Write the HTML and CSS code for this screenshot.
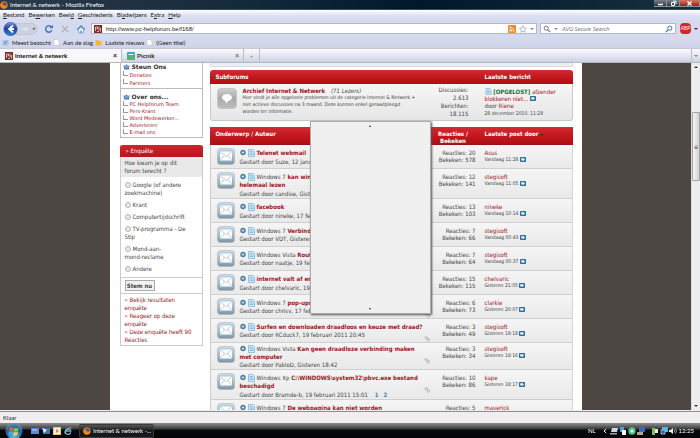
FILE: index.html
```html
<!DOCTYPE html>
<html lang="nl">
<head>
<meta charset="utf-8">
<title>Internet &amp; netwerk - Mozilla Firefox</title>
<link rel="stylesheet" href="styles.css">
</head>
<body>
<svg class="defs" aria-hidden="true">
  <defs>
    <linearGradient id="steel" x1="0" y1="0" x2="0" y2="1"><stop offset="0" stop-color="#dfe6ea"/><stop offset="1" stop-color="#7f929e"/></linearGradient>
    <linearGradient id="glass" x1="0" y1="0" x2="0" y2="1"><stop offset="0" stop-color="#b4d2e2"/><stop offset="1" stop-color="#86a9bd"/></linearGradient>
    <linearGradient id="grey" x1="0" y1="0" x2="0" y2="1"><stop offset="0" stop-color="#cfcfcf"/><stop offset=".5" stop-color="#a9a9a9"/><stop offset="1" stop-color="#bdbdbd"/></linearGradient>
    <radialGradient id="orb" cx=".5" cy=".8" r=".8"><stop offset="0" stop-color="#5fc4ee"/><stop offset=".6" stop-color="#1c5f9c"/><stop offset="1" stop-color="#7d98ab"/></radialGradient>
    <linearGradient id="back" x1="0" y1="0" x2="0" y2="1"><stop offset="0" stop-color="#7d9ce0"/><stop offset=".45" stop-color="#1c3f9e"/><stop offset="1" stop-color="#2d7fe0"/></linearGradient>
  </defs>
  <symbol id="mail" viewBox="0 0 18 17"><rect x=".5" y=".5" width="17" height="16" rx="3" fill="url(#steel)" stroke="#a9b5bc" stroke-width=".6"/><rect x="2" y="1.6" width="14" height="12.6" rx="2" fill="url(#glass)"/><rect x="3" y="3.500" width="12" height="9" fill="#fdfdfd"/><path d="M3 3.500l6 5.100L15 3.500M3 12.500l4.300-5M15 12.500l-4.300-5" fill="none" stroke="#9fadb5" stroke-width=".6"/></symbol>
  <symbol id="page" viewBox="0 0 7 8"><path d="M.5.500h4.600L6.500 2v5.500h-6z" fill="#d8edfb" stroke="#7db4de" stroke-width=".8"/><path d="M1.600 2.500h3M1.600 4h4M1.600 5.500h4" stroke="#6fb0de" stroke-width=".8"/></symbol>
  <symbol id="dot" viewBox="0 0 6 6"><circle cx="3" cy="3" r="2.700" fill="#4f7f9c"/><path d="M1.700 2.300h2.600L3 4.400z" fill="#fff"/></symbol>
  <symbol id="go" viewBox="0 0 6 5"><rect width="6" height="5" rx=".8" fill="#2d6f9c"/><path d="M1.200 1.300h2v-.6L5 2.500 3.200 4.200v-.7h-2z" fill="#e8f3fa"/></symbol>
  <symbol id="clip" viewBox="0 0 8 7"><path d="M1 3.200L3 1.200l4 3.600-1.600 1.600L2.500 3.700l1-1 2.400 2.200" fill="#dce5eb" stroke="#a9bac5" stroke-width=".9"/></symbol>
  <symbol id="globe" viewBox="0 0 7 6"><path d="M.5 1l1.500 1L3.500.2 5 2l1.500-1-.5 4.500H1z" fill="#4d80c0"/><path d="M1.500 3h4" stroke="#b5d2ee" stroke-width=".8"/></symbol>
  <symbol id="fox" viewBox="0 0 8 8"><circle cx="4" cy="4" r="3.800" fill="#e66a12"/><circle cx="4.400" cy="3.500" r="2.100" fill="#31579f"/><path d="M.4 3C1.500 2.200 3 3 3.600 4c.8 1.200 2.400 1 3.500-.2C7 6.500 5.400 7.600 4 7.600 2 7.600.2 6 .4 3z" fill="#f08a1a"/></symbol>
  <symbol id="fav" viewBox="0 0 8 8"><rect width="8" height="8" fill="#7b2a26"/><path d="M1.500 6V2h2v2h-1M5 1.500v4M6.500 3v3.500M3 6.500h2" fill="none" stroke="#e6c9c4" stroke-width=".9"/></symbol>
  <symbol id="sheet" viewBox="0 0 7 8"><path d="M.5.500h4L6.500 2.500v5h-6z" fill="#fff" stroke="#b8bdc9" stroke-width=".7"/></symbol>
  <symbol id="glassm" viewBox="0 0 8 8"><circle cx="3.200" cy="3.200" r="2.100" fill="none" stroke="currentColor"/><path d="M4.800 4.800l2.400 2.400" stroke="currentColor" stroke-width="1.200"/></symbol>
</svg>

<header class="titlebar">
  <svg class="i8"><use href="#fox"/></svg>
  <span class="caption">Internet &amp; netwerk - Mozilla Firefox</span>
  <div class="winbtns">
    <button aria-label="Minimaliseren"><svg viewBox="0 0 12 7"><path d="M4 4.500h5" stroke="#fff" stroke-width="1.500"/></svg></button>
    <button aria-label="Herstellen"><svg viewBox="0 0 12 7"><path d="M4.500 2.500h3v3h-3zM6 1.200h3v3" fill="none" stroke="#fff"/></svg></button>
    <button class="close" aria-label="Sluiten"><svg viewBox="0 0 18 7"><path d="M7 1.500l4 4M11 1.500l-4 4" stroke="#fff" stroke-width="1.300"/></svg></button>
  </div>
</header>

<nav class="menubar">
  <button><u>B</u>estand</button><button>Be<u>w</u>erken</button><button>Beel<u>d</u></button><button><u>G</u>eschiedenis</button><button>Bl<u>a</u>dwijzers</button><button>E<u>x</u>tra</button><button><u>H</u>elp</button>
</nav>

<div class="navbar">
  <button class="nav-back" aria-label="Terug en vooruit"><svg viewBox="0 0 36 14"><rect x="8" y="1.500" width="27" height="11" rx="5.500" fill="#cbd1dd" stroke="#b5bccb" stroke-width=".6"/><circle cx="8.500" cy="7" r="6.700" fill="url(#back)" stroke="#3a4f86" stroke-width=".5"/><path d="M11 3.500L7 7l4 3.500M7 7h5" fill="none" stroke="#fff" stroke-width="1.800"/><path d="M19 7h6M23 5l2.500 2L23 9" fill="none" stroke="#dfe3ec" stroke-width="1.400"/><path d="M30.500 6.300h3L32 8z" fill="#444"/></svg></button>
  <button class="nav-ico" aria-label="Vernieuwen"><svg viewBox="0 0 10 10"><path d="M7.800 6.200A3.200 3.200 0 1 1 7 2.600" fill="none" stroke="#3d78c4" stroke-width="1.500"/><path d="M5.300 4.300H9V.7z" fill="#3d78c4"/></svg></button>
  <button class="nav-ico" aria-label="Stoppen"><svg viewBox="0 0 10 10"><path d="M2 2l6 6M8 2L2 8" stroke="#aeb4c2" stroke-width="1.400"/></svg></button>
  <button class="nav-ico" aria-label="Startpagina"><svg viewBox="0 0 10 10"><path d="M1 5.600L5 1.800l4 3.800" fill="none" stroke="#4d86bd" stroke-width="1.300"/><path d="M2.500 5.500L5 3.200l2.500 2.300V9h-5z" fill="#e9f2fa" stroke="#6b9cc8" stroke-width=".7"/><path d="M4.400 6.500h1.300V9H4.400z" fill="#4d86bd"/></svg></button>
  <div class="urlbox">
    <svg class="i8"><use href="#fav"/></svg>
    <input aria-label="Adres" value="http://www.pc-helpforum.be/f168/">
    <svg class="i8" viewBox="0 0 8 8"><rect width="8" height="8" rx="1" fill="#ee8a26"/><path d="M1.500 2a4.500 4.500 0 0 1 4.500 4.500M1.500 4a2.500 2.500 0 0 1 2.500 2.500" fill="none" stroke="#fff"/><circle cx="2" cy="6" r=".7" fill="#fff"/></svg>
    <svg class="i8" viewBox="0 0 8 8"><path d="M4 .7l1 2.200 2.400.3-1.700 1.700.4 2.400L4 6.200 1.900 7.300l.4-2.400L.6 3.200 3 2.900z" fill="#fff" stroke="#8b8f98" stroke-width=".6"/></svg>
    <span class="caret"></span>
  </div>
  <div class="searchbox">
    <svg class="i8 dim"><use href="#glassm"/></svg><span class="caret"></span>
    <input aria-label="Zoeken" placeholder="AVG Secure Search">
    <svg class="i8 flip"><use href="#glassm"/></svg>
  </div>
  <button class="abp">ABP</button><span class="caret dark"></span>
</div>

<div class="bookmarks">
  <a href="#"><svg class="i7" viewBox="0 0 7 7"><rect x=".5" y="1" width="6" height="5.500" rx="1" fill="#9cc5ee"/><path d="M2 5l3-3" stroke="#3f78b8"/></svg>Meest bezocht</a>
  <a href="#"><svg class="i7"><use href="#sheet"/></svg>Aan de slag</a>
  <a href="#"><svg class="i7" viewBox="0 0 7 7"><path d="M.5 1h2.500l.8 1h2.700v4.500h-6z" fill="#f4b73c"/></svg>Laatste nieuws</a>
  <a href="#"><svg class="i7"><use href="#sheet"/></svg>(Geen titel)</a>
</div>

<div class="tabs">
  <button class="tab active"><svg class="i8"><use href="#fav"/></svg><span>Internet &amp; netwerk</span><i>×</i></button>
  <button class="tab"><svg class="i8" viewBox="0 0 8 8"><rect width="8" height="8" rx="1" fill="#3aa6c8"/><path d="M0 5.500Q4 3 8 5.500V8H0z" fill="#58b85a"/><path d="M1.500 2.500h5" stroke="#fff"/></svg><span>Picnik</span><i>×</i></button>
  <button class="newtab" aria-label="Nieuw tabblad">+</button>
  <button class="alltabs" aria-label="Alle tabbladen"><span class="caret"></span></button>
</div>

<div class="viewport">
  <div class="canvas">
    <div class="page">
      <aside>
        <section class="linkbox">
          <h2><svg><use href="#globe"/></svg>Steun Ons</h2>
          <ul><li><a href="#">Donaties</a></li><li><a href="#">Partners</a></li></ul>
        </section>
        <section class="linkbox second">
          <h2><svg><use href="#globe"/></svg>Over ons...</h2>
          <ul><li><a href="#">PC Helpforum Team</a></li><li><a href="#">Pers-Krant</a></li><li><a href="#">Word Medewerker...</a></li><li><a href="#">Adverteren</a></li><li><a href="#">E-mail ons</a></li></ul>
        </section>
        <form class="poll">
          <h2>» Enquête</h2>
          <p>Hoe kwam je op dit forum terecht ?</p>
          <div class="options">
            <label><input type="radio" name="q">Google (of andere zoekmachine)</label>
            <label><input type="radio" name="q">Krant</label>
            <label><input type="radio" name="q">Computertijdschrift</label>
            <label><input type="radio" name="q">TV-programma - De Stip</label>
            <label><input type="radio" name="q">Mond-aan-<br>mond-reclame</label>
            <label><input type="radio" name="q">Andere</label>
          </div>
          <div class="vote"><button type="button">Stem nu</button></div>
          <div class="results"><a href="#">» Bekijk resultaten enquête</a><a href="#">» Reageer op deze enquête</a><a href="#">» Deze enquête heeft 90 Reacties</a></div>
        </form>
      </aside>

      <main>
        <div class="stub"></div>
        <section class="subforums">
          <div class="redbar"><span>Subforums</span><span>Laatste bericht</span></div>
          <div class="forum">
            <svg class="bubble" viewBox="0 0 20 21"><rect x=".5" y=".5" width="19" height="20" rx="3.500" fill="url(#grey)" stroke="#c6c6c6"/><ellipse cx="10" cy="9.500" rx="5" ry="3.500" fill="#fff"/><path d="M8 12l1 3.500 3-3.500z" fill="#fff"/></svg>
            <div class="about"><h3><a href="#">Archief Internet &amp; Netwerk</a> <em>(71 Lezers)</em></h3><p>Hier vindt je alle opgeloste problemen uit de categorie Internet &amp; Netwerk + niet actieve discussies na 3 maand. Deze kunnen enkel geraadpleegd worden ter informatie.</p></div>
            <div class="totals">Discussies:<br>2.613<br>Berichten:<br>18.115</div>
            <div class="latest"><svg class="pg"><use href="#page"/></svg> <a href="#"><b>[OPGELOST]</b> afzender<br>blokkeren niet...</a> <svg class="go"><use href="#go"/></svg><br>door <a href="#">Riene</a><br><small>28 december 2010, 11:28</small></div>
          </div>
        </section>

        <table class="threads">
          <colgroup><col class="c-icon"><col><col class="c-count"><col class="c-last"></colgroup>
          <thead><tr><th colspan="2">Onderwerp / Auteur</th><th class="mid">Reacties / Bekeken</th><th class="by">Laatste post door <span class="caret dark"></span></th></tr></thead>
          <tbody>
            <tr class="loose"><td><svg class="mail"><use href="#mail"/></svg></td><td><svg class="dot"><use href="#dot"/></svg><svg class="pg"><use href="#page"/></svg><a href="#">Telenet webmail</a><p>Gestart door Suze, 12 januari 2011</p></td><td>Reacties: 20<br>Bekeken: 578</td><td><a href="#">Asus</a><p>Vandaag 11:28 <svg class="go"><use href="#go"/></svg></p></td></tr>
            <tr class="loose tall"><td><svg class="mail"><use href="#mail"/></svg></td><td><svg class="dot"><use href="#dot"/></svg><svg class="pg"><use href="#page"/></svg>Windows 7 <a href="#">kan windows mail niet<br>helemaal lezen</a><p>Gestart door candise, Gisteren</p></td><td>Reacties: 12<br>Bekeken: 141</td><td><a href="#">stegisoft</a><p>Vandaag 11:05 <svg class="go"><use href="#go"/></svg></p></td></tr>
            <tr class="loose"><td><svg class="mail"><use href="#mail"/></svg></td><td><svg class="dot"><use href="#dot"/></svg><svg class="pg"><use href="#page"/></svg><a href="#">facebook</a><p>Gestart door nineke, 17 februari 2011</p></td><td>Reacties: 13<br>Bekeken: 103</td><td><a href="#">nineke</a><p>Vandaag 10:14 <svg class="go"><use href="#go"/></svg></p></td></tr>
            <tr><td><svg class="mail"><use href="#mail"/></svg></td><td><svg class="dot"><use href="#dot"/></svg><svg class="pg"><use href="#page"/></svg>Windows 7 <a href="#">Verbinding</a><p>Gestart door VDT, Gisteren</p></td><td>Reacties: 7<br>Bekeken: 66</td><td><a href="#">stegisoft</a><p>Vandaag 00:43 <svg class="go"><use href="#go"/></svg></p></td></tr>
            <tr><td><svg class="mail"><use href="#mail"/></svg></td><td><svg class="dot"><use href="#dot"/></svg><svg class="pg"><use href="#page"/></svg>Windows Vista <a href="#">Router</a><p>Gestart door naatje, 19 februari 2011</p></td><td>Reacties: 7<br>Bekeken: 64</td><td><a href="#">stegisoft</a><p>Vandaag 00:37 <svg class="go"><use href="#go"/></svg></p></td></tr>
            <tr class="loose"><td><svg class="mail"><use href="#mail"/></svg></td><td><svg class="dot"><use href="#dot"/></svg><svg class="pg"><use href="#page"/></svg><a href="#">internet valt af en toe</a><p>Gestart door chelvaric, 19 februari 2011</p></td><td>Reacties: 15<br>Bekeken: 115</td><td><a href="#">chelvaric</a><p>Gisteren 21:05 <svg class="go"><use href="#go"/></svg></p></td></tr>
            <tr><td><svg class="mail"><use href="#mail"/></svg></td><td><svg class="clip"><use href="#clip"/></svg><svg class="dot"><use href="#dot"/></svg><svg class="pg"><use href="#page"/></svg>Windows 7 <a href="#">pop-ups</a><p>Gestart door chrisv, 17 februari</p></td><td>Reacties: 6<br>Bekeken: 73</td><td><a href="#">clarkie</a><p>Gisteren 20:07 <svg class="go"><use href="#go"/></svg></p></td></tr>
            <tr><td><svg class="mail"><use href="#mail"/></svg></td><td><svg class="clip"><use href="#clip"/></svg><svg class="dot"><use href="#dot"/></svg><svg class="pg"><use href="#page"/></svg><a href="#">Surfen en downloaden draadloos en keuze met draad?</a><p>Gestart door RCduck7, 19 februari 2011 20:45</p></td><td>Reacties: 3<br>Bekeken: 49</td><td><a href="#">stegisoft</a><p>Gisteren 19:18 <svg class="go"><use href="#go"/></svg></p></td></tr>
            <tr class="mid-tall"><td><svg class="mail"><use href="#mail"/></svg></td><td><svg class="clip"><use href="#clip"/></svg><svg class="dot"><use href="#dot"/></svg><svg class="pg"><use href="#page"/></svg>Windows Vista <a href="#">Kan geen draadloze verbinding maken<br>met computer</a><p>Gestart door PabloD, Gisteren 18:42</p></td><td>Reacties: 3<br>Bekeken: 34</td><td><a href="#">stegisoft</a><p>Gisteren 19:16 <svg class="go"><use href="#go"/></svg></p></td></tr>
            <tr class="loose tall"><td><svg class="mail"><use href="#mail"/></svg></td><td><svg class="clip"><use href="#clip"/></svg><svg class="dot"><use href="#dot"/></svg><svg class="pg"><use href="#page"/></svg>Windows Xp <a href="#">C:\WINDOWS\system32\pbvc.exe bestand<br>beschadigd</a><p>Gestart door Bramde-b, 19 februari 2011 15:01 <span class="pages"><a href="#">1</a><a href="#">2</a></span></p></td><td>Reacties: 10<br>Bekeken: 86</td><td><a href="#">kape</a><p>Gisteren 18:17 <svg class="go"><use href="#go"/></svg></p></td></tr>
            <tr><td><svg class="mail"><use href="#mail"/></svg></td><td><svg class="dot"><use href="#dot"/></svg><svg class="pg"><use href="#page"/></svg>Windows 7 <a href="#">De webpagina kan niet worden</a></td><td>Reacties: 5</td><td><a href="#">maverick</a></td></tr>
          </tbody>
        </table>
        <div class="popup"><span class="caret up dark"></span><span class="caret dark"></span></div>
      </main>
    </div>
  </div>
  <div class="scrollbar"><span class="caret up dark"></span><div class="thumb">≡</div><span class="caret dark"></span></div>
</div>

<footer class="status">Klaar</footer>
<div class="taskbar">
  <button class="start" aria-label="Start"><svg viewBox="0 0 18 15"><circle cx="9" cy="8" r="8.500" fill="url(#orb)"/><path d="M4.500 5Q6.500 3.600 8.500 4.800L8 7.800Q6 6.800 4 8z" fill="#f0602c"/><path d="M9.300 5Q11.500 6 13.500 4.800L13 7.800Q11 9 8.800 8z" fill="#8ecb3c"/><path d="M3.900 8.800Q6 7.700 7.900 8.700l-.5 3Q5.400 10.800 3.400 12z" fill="#4aa5ea"/><path d="M8.700 9Q11 10 12.900 8.700l-.5 3Q10.400 13 8.200 12z" fill="#fbd23a"/></svg></button>
  <div class="quick">
    <svg class="i8" viewBox="0 0 8 8"><rect y="1" width="8" height="6" fill="#5f86d6"/><path d="M1 3h5" stroke="#c4d6f5"/></svg>
    <svg class="i8" viewBox="0 0 8 8"><rect x="1" y="1" width="7" height="6" fill="#4570b8"/><path d="M0 1l5 2-3 3z" fill="#e4ecf6"/></svg>
    <svg class="i8" viewBox="0 0 8 8"><rect width="8" height="8" fill="#eec95a"/><rect x="1" y="1" width="6" height="6" fill="#e7f0f8"/><path d="M3 2l3 2-3 2z" fill="#e8821a"/></svg>
    <svg class="i8" viewBox="0 0 8 8"><path d="M6.700 5.500A2.800 2.800 0 1 1 6.800 4H2" fill="none" stroke="#52b5ea" stroke-width="1.300"/><path d="M1 7Q0 5 3 2.500T7.500 1" fill="none" stroke="#f0cf52" stroke-width=".7"/></svg>
  </div>
  <button class="task"><svg class="i8"><use href="#fox"/></svg>Internet &amp; netwerk -...</button>
  <div class="tray">
    <span class="lang">NL</span><svg class="chev" viewBox="0 0 4 6"><path d="M3.200 1L1 3l2.200 2" fill="none" stroke="#fff"/></svg>
    <svg class="i8" viewBox="0 0 8 8"><path d="M2 1h6L7 5H1z" fill="#cfd5e4"/><path d="M0 6h7v1.500H0z" fill="#9aa2b4"/></svg>
    <svg class="i8" viewBox="0 0 8 8"><path d="M1 0h4v5H1z" fill="#3fa6e0"/><path d="M3 3h4v5H3z" fill="#f2f6fa"/></svg>
    <svg class="i8" viewBox="0 0 8 8"><circle cx="4" cy="4" r="3.700" fill="#4fc08a"/><circle cx="4" cy="4" r="1.600" fill="#e8fff4"/></svg>
    <svg class="i8" viewBox="0 0 8 8"><path d="M2 0h6v5H2z" fill="#3b69b8"/><path d="M0 5h6v3H0z" fill="#b3a68c"/></svg>
    <svg class="i8 gap" viewBox="0 0 8 8"><path d="M1 1h3v7H1z" fill="#79bd63"/><path d="M4 2h3v4H4z" fill="#e8efe4"/></svg>
    <svg class="i8" viewBox="0 0 8 8"><rect x="2" width="6" height="5" fill="#4fb3e6"/><rect x="1" y="3" width="4" height="4" fill="#2a62a4" stroke="#b9dff2" stroke-width=".7"/></svg>
    <svg class="i8" viewBox="0 0 8 8"><path d="M0 3h1.500L4 1v6L1.500 5H0z" fill="#e8eef2"/><path d="M5.200 2.500q1.200 1.500 0 3M6.500 1.500q2 2.500 0 5" fill="none" stroke="#c9d6de" stroke-width=".7"/></svg>
    <time>12:25</time>
  </div>
</div>
</body>
</html>
```

FILE: styles.css
```css
* { box-sizing: border-box; }
body { margin: 0; height: 100vh; display: flex; flex-direction: column; overflow: hidden; background: #f0eff0; color: #444; font: 6px/8px "DejaVu Sans Condensed", "DejaVu Sans", sans-serif; }
h2, h3, p, ul { margin: 0; padding: 0; font-size: inherit; }
ul { list-style: none; }
a { color: #9c1424; text-decoration: none; }
button, input { font: inherit; color: inherit; border: 0; padding: 0; margin: 0; background: none; }
svg { flex: none; }
.defs { position: absolute; width: 0; height: 0; }
.i8 { width: 8px; height: 8px; }
.i7 { width: 7px; height: 7px; }
.caret { display: inline-block; flex: none; width: 0; height: 0; border: 2px solid transparent; border-top-color: #888; border-bottom: 0; }
.caret.dark { border-top-color: #333; }
.caret.up { transform: rotate(180deg); }

.titlebar, .menubar, .navbar, .bookmarks, .tabs, .status, .taskbar { flex: none; display: flex; align-items: center; font-family: "Liberation Sans", sans-serif; }
.titlebar { height: 10px; background: linear-gradient(90deg, #2b3b4a, #14293a 35%, #03172b 60%, #17303f); color: #fff; gap: 2px; border-bottom: 1px solid #39495a; }
.caption { font-family: Lato, sans-serif; }
.winbtns { margin-left: auto; align-self: flex-start; display: flex; }
.winbtns button { height: 7px; width: 13px; background: linear-gradient(#77818b, #2d3742); border: solid #8a949d; border-width: 0 1px 1px 0; display: flex; }
.winbtns svg { width: 100%; height: 7px; }
.winbtns .close { width: 20px; background: linear-gradient(#d07668, #a3200f); }
.menubar { height: 10px; gap: 4px; padding: 0 3px; background: linear-gradient(#fff, #dadef0 60%); color: #222; font-family: Lato, sans-serif; }
.menubar button { line-height: 8px; }
.menubar u { text-underline-offset: 1px; }
.navbar { height: 17px; padding: 0 2px; background: #d6daee; gap: 3px; }
.nav-back { width: 36px; height: 14px; }
.nav-back svg { width: 36px; height: 14px; display: block; }
.nav-ico { width: 10px; height: 10px; margin-left: 3px; }
.nav-ico svg { width: 10px; height: 10px; display: block; }
.urlbox, .searchbox { display: flex; align-items: center; gap: 3px; height: 11px; background: #fff; border: 1px solid #b4b9c9; padding: 0 2px; }
.urlbox { flex: 1; margin-left: 2px; }
.urlbox input { flex: 1; min-width: 0; padding-left: 1px; height: 9px; color: #222; }
.searchbox { width: 136px; }
.searchbox input { flex: 1; min-width: 0; height: 9px; font-style: italic; font-family: Lato, sans-serif; padding-left: 1px; }
.searchbox input::placeholder { color: #777; opacity: 1; }
.dim { color: #777; }
.flip { color: #32769c; transform: scaleX(-1); }
.abp { width: 11px; height: 11px; border-radius: 4px; background: #d8232a; color: #fff; font-size: 5px; line-height: 11px; text-align: center; margin-left: 1px; }
.bookmarks { height: 12px; padding: 0 2px; gap: 2px; background: linear-gradient(#d6daee, #cfd4ea); border-bottom: 1px solid #c3c7d6; font-family: Lato, sans-serif; }
.bookmarks a { color: #222; display: flex; align-items: center; gap: 3px; }
.tabs { height: 14px; background: linear-gradient(#fbfbfe, #dfe2f0 60%, #cfd2e0); border-bottom: 1px solid #b5b6bd; align-items: stretch; }
.tab { width: 122px; display: flex; align-items: center; gap: 2px; padding: 0 4px 0 5px; border-right: 1px solid #b9bdca; text-align: left; font-weight: bold; color: #333; }
.tab span { flex: 1; }
.tab i { font: bold 7px/8px "Liberation Sans", sans-serif; color: #777; }
.tab.active { background: #f8f8fb; color: #111; }
.tab.active i { color: #333; }
.newtab { width: 16px; border-right: 1px solid #b9bdca; color: #888; }
.alltabs { width: 9px; margin-left: auto; border-left: 1px solid #b9bdca; display: grid; place-items: center; }

.viewport { flex: 1; min-height: 0; display: flex; background: #4c4742; border-bottom: 1px solid #eee; }
.canvas { flex: 1; overflow: hidden; }
.page { max-width: 472px; margin: 0 auto; min-height: 100%; padding: 0 9px 0 10px; display: grid; grid-template-columns: 83px minmax(0, 1fr); gap: 7px; background: #fff; }
.linkbox { border: 1px solid #bbb; border-top: 0; padding: 0 2px 1px; }
.linkbox.second { padding-top: 4px; }
.linkbox h2 { display: flex; align-items: center; gap: 2px; font: bold 6px/8px "DejaVu Sans", sans-serif; color: #333; }
.linkbox h2 svg { width: 7px; height: 6px; }
.linkbox ul { font: 5px/7px "DejaVu Sans", sans-serif; }
.linkbox li { display: flex; gap: 2px; height: 8px; line-height: 8px; }
.linkbox.second li { height: 7px; line-height: 7px; }
.linkbox li::before { content: ""; width: 4px; height: 4px; border: solid #999; border-width: 0 0 1px 1px; }
.poll { margin-top: 7px; border: 1px solid #ccc; border-top: 0; }
.poll h2 { margin: 0 -1px; height: 12px; padding: 0 6px; font-weight: normal; line-height: 12px; color: #fff; background: linear-gradient(#cf242b, #b9151d); border-radius: 3px 3px 0 0; }
.poll p { background: #e9e9e9; padding: 2px 15px 2px 4px; }
.options { display: grid; gap: 4px; padding: 4px; }
.options input { appearance: none; width: 6px; height: 6px; border: 1px solid #b5b5b5; border-radius: 50%; background: #e9e9e9; margin-right: 2px; vertical-align: -1px; }
.vote { border: solid #ccc; border-width: 1px 0; padding: 2px 4px; display: flex; }
.vote button { width: 30px; height: 11px; border: 1px solid #aaa; background: #f2f2f2; font-weight: bold; line-height: 9px; }
.results { padding: 2px 4px 1px; }
.results a { display: block; padding-right: 6px; }

main { position: relative; min-width: 0; }
.stub { height: 4px; background: #efefef; border: 1px solid #ddd; border-top: 0; }
.subforums { margin-top: 3px; }
.redbar, .threads th { background: linear-gradient(#d22b31, #c2161d 55%, #ae0e15); color: #fff; font-weight: bold; text-align: left; }
.redbar { display: flex; height: 14px; padding: 0 6px; line-height: 14px; border-radius: 3px 3px 0 0; }
.redbar span:first-child { flex: 1; }
.redbar span:last-child { width: 82px; }
.forum { display: flex; height: 37px; padding: 2px 4px 0 6px; background: linear-gradient(#f6f6f6, #e6e6e6); border: 1px solid #c9c9c9; border-top: 0; border-radius: 0 0 3px 3px; }
.bubble { width: 20px; height: 21px; margin-top: 2px; }
.about { flex: 1; padding: 1px 6px 0; }
.about h3 { line-height: 7px; }
.about em { font-weight: normal; margin-left: 4px; }
.about p { font-size: 5px; line-height: 7px; }
.totals { width: 46px; text-align: right; }
.latest { width: 99px; padding: 2px 0 0 16px; line-height: 7px; }
.latest b { color: #1c6a3c; }
.latest small { font-size: 5px; }
.pg { width: 7px; height: 8px; vertical-align: top; }
.latest .pg { height: 7px; }
.go { width: 6px; height: 6px; padding-top: 1px; vertical-align: top; }

.threads { width: 100%; margin-top: 6px; table-layout: fixed; border-collapse: separate; border-spacing: 0; }
.c-icon { width: 30px; }
.c-count { width: 45px; }
.c-last { width: 97px; }
.threads th { height: 18px; padding: 3px 6px 0; line-height: 7px; vertical-align: top; border-bottom: 1px solid #9b1119; }
.threads .mid { text-align: center; }
.threads .by { padding-left: 9px; }
.threads td { height: 24px; padding: 4px 0 0; vertical-align: top; border-bottom: 1px solid #cfcfcf; white-space: nowrap; background: linear-gradient(#f5f5f5, #e9e9e9); }
.threads .tall td { height: 30px; }
.threads .mid-tall td { height: 27px; padding-top: 2px; }
.threads td:first-child { padding: 3px 0 0 6px; line-height: 0; border-left: 1px solid #ccc; }
.threads td:nth-child(2) a { font-weight: bold; }
.threads td:nth-child(2) .dot, .threads td:nth-child(2) .pg { margin-right: 2px; }
.threads .loose p { margin-top: 1px; }
.threads td:nth-child(3) { text-align: right; line-height: 7px; }
.threads td:nth-child(4) { padding-left: 9px; line-height: 7px; border-right: 1px solid #d5d5d5; }
.threads td:nth-child(4) p { font-size: 5px; margin-top: 0; }
.mail { width: 18px; height: 17px; }
.dot { width: 6px; height: 7px; vertical-align: top; }
.clip { float: right; width: 8px; height: 7px; margin-top: 12px; }
.threads .pages a { font-weight: normal; margin-left: 5px; color: #4a7da5; }
.popup { position: absolute; left: 100px; top: 58px; width: 121px; height: 193px; background: #f0f0f0; border: 1px solid #aaa; box-shadow: 1px 1px 2px #555; display: flex; flex-direction: column; justify-content: space-between; align-items: center; padding: 3px; }
.popup .caret { border-width: 2px 1px 0; }

.scrollbar { width: 9px; background: #ededee; display: flex; flex-direction: column; align-items: center; padding: 3px 0; border-left: 1px solid #ddd; }
.thumb { margin: 44px 0 auto; width: 8px; height: 69px; border: 1px solid #a3a3a3; border-radius: 1px; background: linear-gradient(90deg, #f6f6f6, #d2d2d5); line-height: 67px; text-align: center; }
.status { height: 12px; padding: 0 3px; border-top: 1px solid #8e8e8e; background: #f0eeef; color: #222; font-family: Lato, sans-serif; }
.taskbar { height: 15px; background: linear-gradient(#8f8f8f, #444 35%, #07090c 50%, #030507); color: #fff; }
.start { width: 18px; height: 15px; margin-left: 5px; }
.start svg { width: 18px; height: 15px; display: block; }
.quick { display: flex; gap: 3px; margin: 0 7px 0 8px; }
.task { width: 75px; height: 14px; display: flex; align-items: center; gap: 2px; padding: 0 3px; background: linear-gradient(#555, #16181b 50%); border: 1px solid #3a3d40; border-radius: 2px; font-family: Lato, sans-serif; white-space: nowrap; }
.tray { margin-left: auto; display: flex; align-items: center; gap: 1px; padding-right: 6px; font-family: Lato, sans-serif; }
.tray .lang { margin-right: 6px; }
.chev { width: 4px; height: 6px; margin-right: 2px; }
.tray .gap { margin-left: 5px; }
.tray time { margin-left: 1px; }
```
